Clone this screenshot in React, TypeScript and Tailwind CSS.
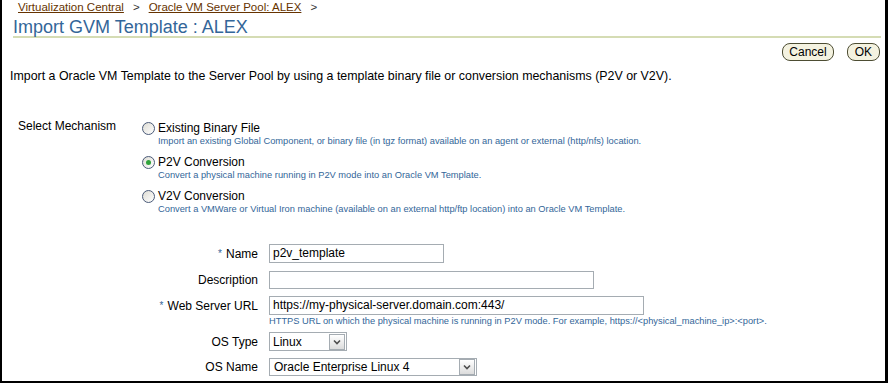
import React from 'react';

const font = { fontFamily: '"Liberation Sans", Arial, sans-serif' };

function Radio({ checked }: { checked?: boolean }) {
  return (
    <span className="relative mr-[3px] inline-flex h-[13px] w-[13px] shrink-0 items-center justify-center rounded-full border border-[#4a5a78] bg-gradient-to-br from-[#dedcd4] to-white">
      {checked && <span className="h-[5px] w-[5px] rounded-full bg-[#2fa33a]" />}
    </span>
  );
}

function Arrow() {
  return (
    <span className="flex h-[16px] w-[16px] items-center justify-center border border-[#a5acb2] bg-gradient-to-b from-white to-[#dcdcdc]">
      <svg width="8" height="6" viewBox="0 0 8 6">
        <path d="M1 1.5 L4 4.5 L7 1.5" stroke="#4d4d4d" strokeWidth="1.6" fill="none" />
      </svg>
    </span>
  );
}

const mechanisms = [
  {
    label: 'Existing Binary File',
    help: 'Import an existing Global Component, or binary file (in tgz format) available on an agent or external (http/nfs) location.',
  },
  {
    label: 'P2V Conversion',
    help: 'Convert a physical machine running in P2V mode into an Oracle VM Template.',
    checked: true,
  },
  {
    label: 'V2V Conversion',
    help: 'Convert a VMWare or Virtual Iron machine (available on an external http/ftp location) into an Oracle VM Template.',
  },
];

export default function App() {
  return (
    <div
      className="box-border h-[383px] w-[888px] overflow-hidden border-b-2 border-l-2 border-r-[3px] border-black bg-white text-[12px] text-black"
      style={font}
    >
      {/* breadcrumbs */}
      <div className="flex items-center pl-[16px] pt-[1px] text-[11.5px] leading-[13px] text-[#663300]">
        <span className="underline">Virtualization Central</span>
        <span className="mx-[9px] text-[#333]">&gt;</span>
        <span className="underline">Oracle VM Server Pool: ALEX</span>
        <span className="ml-[9px] text-[#333]">&gt;</span>
      </div>

      {/* title */}
      <div className="ml-[11px] mr-[4px] mt-[4px] border-b-2 border-[#d5dcb4] pb-[0px] text-[18px] leading-[18px] text-[#336699]">
        Import GVM Template : ALEX
      </div>

      <div className="mt-[5px] flex justify-end gap-[13px] pr-[5px]">
        <button className="h-[18px] rounded-[8px] border border-[#4d4d33] bg-[#f4f2e0] px-[6px] text-[12px] leading-[15px]">
          Cancel
        </button>
        <button className="h-[18px] rounded-[8px] border border-[#4d4d33] bg-[#f4f2e0] px-[7px] text-[12px] leading-[15px]">
          OK
        </button>
      </div>

      <p className="ml-[8px] mt-[8px] text-[12.4px] leading-[14px]">
        Import a Oracle VM Template to the Server Pool by using a template binary file or conversion mechanisms (P2V or V2V).
      </p>

      {/* mechanism */}
      <div className="mt-[36px] flex">
        <div className="w-[140px] pl-[16px] leading-[14px]">Select Mechanism</div>
        <div className="flex flex-col gap-[8px] pt-[2px]">
          {mechanisms.map((m) => (
            <div key={m.label}>
              <div className="flex items-center leading-[14px]">
                <Radio checked={m.checked} />
                <span>{m.label}</span>
              </div>
              <div className="ml-[16px] mt-[1px] text-[9.3px] leading-[11px] text-[#336699]">{m.help}</div>
            </div>
          ))}
        </div>
      </div>

      {/* form */}
      <div className="mt-[29px] grid grid-cols-[256px_auto] items-center gap-x-[11px]">
        <div className="flex items-center justify-end gap-[4px]">
          <span className="text-[10px] leading-[10px] text-[#336699]">*</span>
          <span>Name</span>
        </div>
        <div className="h-[19px] w-[175px] border border-[#a5acb2] px-[3px] leading-[17px]">p2v_template</div>

        <div className="mt-[8px] text-right">Description</div>
        <div className="mt-[8px] h-[18px] w-[325px] border border-[#a5acb2]" />

        <div className="mt-[7px] flex items-center justify-end gap-[4px]">
          <span className="text-[10px] leading-[10px] text-[#336699]">*</span>
          <span>Web Server URL</span>
        </div>
        <div className="mt-[7px] h-[19px] w-[375px] border border-[#a5acb2] px-[3px] leading-[17px]">
          https://my-physical-server.domain.com:443/
        </div>

        <div />
        <div className="mt-[1px] text-[9.3px] leading-[11px] text-[#336699]">
          HTTPS URL on which the physical machine is running in P2V mode. For example, https://&lt;physical_machine_ip&gt;:&lt;port&gt;.
        </div>

        <div className="mt-[5px] text-right">OS Type</div>
        <div className="mt-[5px] flex h-[19px] w-[78px] items-center justify-between border border-[#a5acb2] pl-[3px] pr-[1px]">
          <span>Linux</span>
          <Arrow />
        </div>

        <div className="mt-[7px] text-right">OS Name</div>
        <div className="mt-[7px] flex h-[18px] w-[208px] items-center justify-between border border-[#a5acb2] pl-[4px] pr-[1px]">
          <span>Oracle Enterprise Linux 4</span>
          <Arrow />
        </div>
      </div>
    </div>
  );
}
